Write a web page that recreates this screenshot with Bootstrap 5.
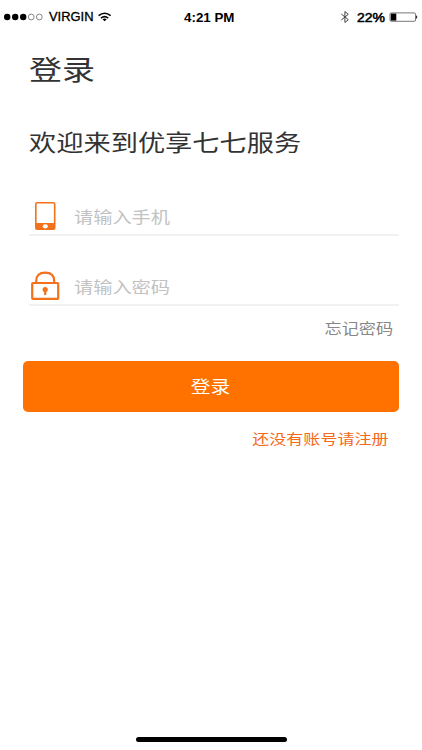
<!DOCTYPE html>
<html lang="zh-CN">
<head>
<meta charset="utf-8">
<meta name="viewport" content="width=device-width, initial-scale=1">
<title>登录</title>
<link href="https://cdn.jsdelivr.net/npm/bootstrap@5.3.0/dist/css/bootstrap.min.css" rel="stylesheet">
<style>
body{font-family:"Noto Sans CJK SC",sans-serif;color:#333;background:#fff}
.screen{height:750px;overflow:hidden}
.status{height:34px;font-family:"Liberation Sans",sans-serif;color:#000;line-height:34px}
.status svg{display:block}
.wide{display:inline-block;transform:scaleX(1.2);transform-origin:left center;white-space:nowrap}
.wide-end{transform-origin:right center}
.wide-mid{transform-origin:center}
.page-title{font-size:27.5px;line-height:40px;margin-top:14px;margin-left:29px;font-weight:400}
.welcome{font-size:22.7px;line-height:34px;margin-top:37px;margin-left:29px;font-weight:400}
.field{height:50px;padding-top:12px;margin-left:29px;margin-right:23px;border-bottom:2px solid #f1f1f1}
.field-phone{margin-top:27px}
.field-password{margin-top:20px}
.field svg{flex:none}
.field .form-control{font-size:16px;width:250px;height:34px;padding:0;margin-left:12px;color:#333;font-family:inherit;transform:scaleX(1.2);transform-origin:left center}
.field .form-control::placeholder{color:#c2c2c2;opacity:1}
.forgot{font-size:14.3px;line-height:22px;color:#888;margin-right:29px;margin-top:11px}
.btn-login{height:50.5px;margin:22px 23px 0;border-radius:5px;background:#ff7200;color:#fff;font-size:16.5px;padding:0;border:0}
.btn-login .wide{margin-left:-2px}
.btn-login:hover{background:#f06a00;color:#fff}
.register{font-size:14.2px;line-height:22px;color:#f4691a;margin-right:33px;margin-top:15.5px}
.home-bar{width:151px;height:5px;border-radius:3px;background:#000;margin-bottom:8px}
</style>
<script src="https://cdn.jsdelivr.net/npm/bootstrap@5.3.0/dist/js/bootstrap.bundle.min.js"></script>
</head>
<body>
<main class="screen d-flex flex-column">
  <header class="status">
    <svg width="422" height="34" viewBox="0 0 422 34" font-size="12">
      <g><circle cx="7.2" cy="17" r="3.2"/><circle cx="15.2" cy="17" r="3.2"/><circle cx="23.2" cy="17" r="3.2"/></g>
      <g fill="none" stroke="#555" stroke-width=".7"><circle cx="31.2" cy="17" r="2.9"/><circle cx="39.3" cy="17" r="2.9"/></g>
      <text x="49" y="20.700" textLength="44.5" lengthAdjust="spacingAndGlyphs" stroke="#000" stroke-width=".3">VIRGIN</text>
      <g fill="none" stroke="#000" stroke-width="1.6"><path d="M98.600 15.600Q104.600 10.800 110.600 15.600"/><path d="M101 18.100Q104.600 15.200 108.200 18.100"/></g>
      <path d="M102.500 19.300Q104.600 17.800 106.700 19.300L104.600 21.300Z"/>
      <text x="184" y="21.500" font-weight="700" textLength="50.5" lengthAdjust="spacingAndGlyphs">4:21 PM</text>
      <path d="M341.300 14L348.300 19.700L344.900 22.500V11.500L348.300 14.300L341.300 20" fill="none" stroke="#444" stroke-width="1"/>
      <text x="357" y="21.500" textLength="28" lengthAdjust="spacingAndGlyphs" stroke="#000" stroke-width=".5">22%</text>
      <rect x="390" y="12.900" width="25.500" height="8.400" rx="1.300" fill="none" stroke="#555" stroke-width=".8"/>
      <rect x="390.800" y="13.600" width="5.500" height="7"/>
      <path d="M416.200 15.300Q418.300 17 416.200 18.900Z"/>
    </svg>
  </header>
  <h1 class="page-title mb-0"><span class="wide">登录</span></h1>
  <h2 class="welcome mb-0"><span class="wide">欢迎来到优享七七服务</span></h2>
  <form class="d-flex flex-column">
    <div class="field field-phone d-flex align-items-center">
      <svg width="33" height="34" viewBox="0 0 33 34">
        <path fill="#f4711c" fill-rule="evenodd" d="M8 3H24.500Q26.500 3 26.500 5V29Q26.500 31 24.500 31H8Q6 31 6 29V5Q6 3 8 3ZM8.200 4.600Q7.600 4.600 7.600 5.200V24H24.900V5.200Q24.900 4.600 24.300 4.600Z"/>
        <ellipse cx="16.300" cy="27.300" rx="2.600" ry="2.100" fill="#fff"/>
      </svg>
      <input class="form-control border-0 bg-transparent shadow-none" type="tel" placeholder="请输入手机" aria-label="手机">
    </div>
    <div class="field field-password d-flex align-items-center">
      <svg width="33" height="34" viewBox="0 0 33 34" fill="none" stroke="#f4711c" stroke-width="2.200">
        <rect x="3.200" y="14" width="26" height="15.800" rx=".8"/>
        <path d="M7.200 14V12Q7.200 3.600 16.200 3.600T25.200 12V14"/>
        <path d="M16.200 21V26"/><circle cx="16.200" cy="20.500" r="2.600" fill="#f4711c" stroke="none"/>
      </svg>
      <input class="form-control border-0 bg-transparent shadow-none" type="password" placeholder="请输入密码" aria-label="密码">
    </div>
    <div class="forgot text-end"><span class="wide wide-end">忘记密码</span></div>
    <button class="btn btn-login" type="button"><span class="wide wide-mid">登录</span></button>
    <div class="register text-end"><span class="wide wide-end">还没有账号请注册</span></div>
  </form>
  <div class="home-bar mt-auto mx-auto"></div>
</main>
</body>
</html>
